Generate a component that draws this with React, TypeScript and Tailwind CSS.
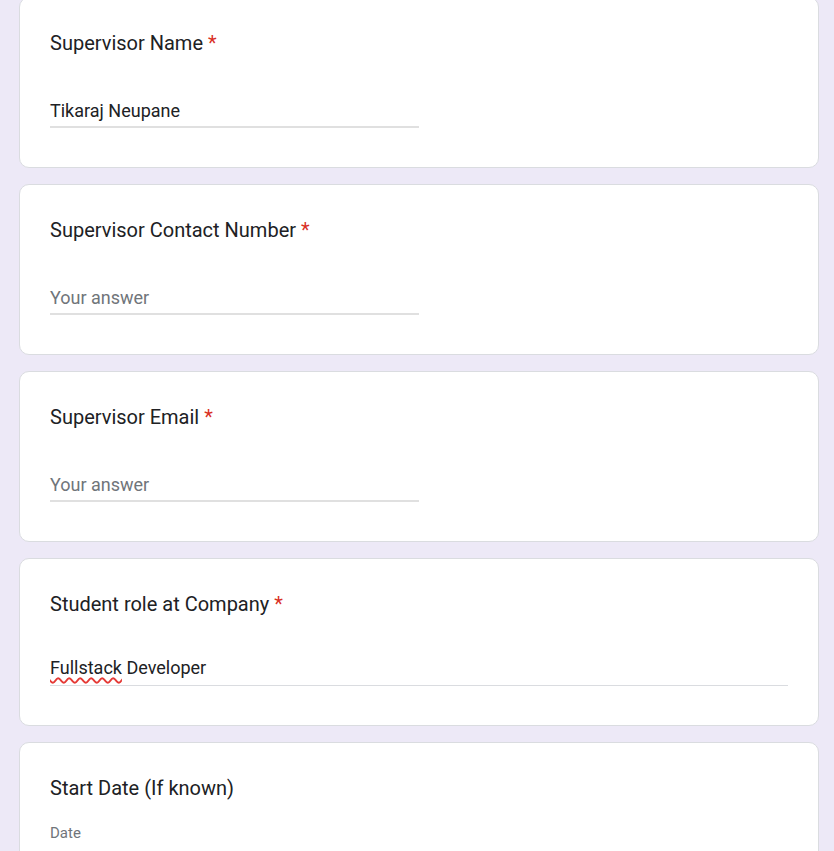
import React from "react";

const font = { fontFamily: "Roboto, 'Noto Sans', Arial, sans-serif" };

function Title({ text, required }: { text: string; required?: boolean }) {
  return (
    <div className="h-[30px] text-[20px] leading-[30px] text-[#202124]">
      {text}
      {required && <span className="text-[#d93025]"> *</span>}
    </div>
  );
}

function ShortCard({ title, value }: { title: string; value?: string }) {
  return (
    <div className="bg-white border border-[#dadce0] rounded-[10px] px-[30px] pt-[30px] pb-[39px]">
      <Title text={title} required />
      <div className="mt-[41px] w-[369px]">
        <div
          className={`h-[24px] text-[18px] leading-[24px] ${
            value ? "text-[#202124]" : "text-[#70757a]"
          }`}
        >
          {value ?? "Your answer"}
        </div>
        <div className="mt-[3px] h-[2px] bg-[#e0e0e0]" />
      </div>
    </div>
  );
}

export default function App() {
  return (
    <div className="min-h-[851px] bg-[#ede9f7] overflow-hidden" style={font}>
      <div className="-mt-[3px] mx-[19px] w-[800px] flex flex-col gap-[16px]">
        <ShortCard title="Supervisor Name" value="Tikaraj Neupane" />
        <ShortCard title="Supervisor Contact Number" />
        <ShortCard title="Supervisor Email" />
        <div className="bg-white border border-[#dadce0] rounded-[10px] px-[30px] pt-[30px] pb-[39px]">
          <Title text="Student role at Company" required />
          <div className="mt-[37px]">
            <div className="h-[24px] text-[18px] leading-[24px] text-[#202124]">
              <span className="underline decoration-wavy decoration-[#e53935] decoration-[1.5px] underline-offset-[3px]">
                Fullstack
              </span>{" "}
              Developer
            </div>
            <div className="mt-[5px] h-px bg-[#dadce0]" />
          </div>
        </div>
        <div className="bg-white border border-[#dadce0] rounded-[10px] px-[30px] pt-[30px] pb-[40px]">
          <Title text="Start Date (If known)" />
          <div className="mt-[20px] h-[20px] text-[15px] leading-[20px] text-[#70757a]">
            Date
          </div>
          <div className="h-[60px]" />
        </div>
      </div>
    </div>
  );
}
